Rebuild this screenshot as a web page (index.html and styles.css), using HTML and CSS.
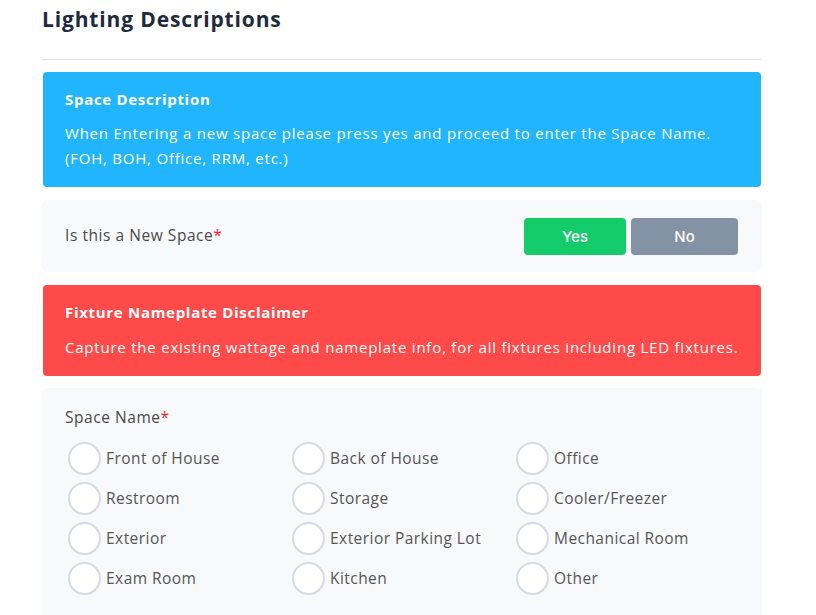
FILE: index.html
```html
<!DOCTYPE html>
<html>
<head>
<meta charset="utf-8">
<link rel="stylesheet" href="styles.css">
</head>
<body>
<div class="page">
  <h1 class="title">Lighting Descriptions</h1>
  <hr class="rule">
  <div class="notice notice-blue">
    <div class="notice-title">Space Description</div>
    <div class="notice-body">When Entering a new space please press yes and proceed to enter the Space Name. (FOH, BOH, Office, RRM, etc.)</div>
  </div>
  <div class="panel panel-row">
    <div class="label label-row">Is this a New Space<span class="req">*</span></div>
    <div class="btns">
      <button class="btn btn-yes">Yes</button>
      <button class="btn btn-no">No</button>
    </div>
  </div>
  <div class="notice notice-red">
    <div class="notice-title">Fixture Nameplate Disclaimer</div>
    <div class="notice-body">Capture the existing wattage and nameplate info, for all fixtures including LED fixtures.</div>
  </div>
  <div class="panel panel-list">
    <div class="label">Space Name<span class="req">*</span></div>
    <div class="grid">
      <label class="opt"><span class="radio"></span>Front of House</label>
      <label class="opt"><span class="radio"></span>Back of House</label>
      <label class="opt"><span class="radio"></span>Office</label>
      <label class="opt"><span class="radio"></span>Restroom</label>
      <label class="opt"><span class="radio"></span>Storage</label>
      <label class="opt"><span class="radio"></span>Cooler/Freezer</label>
      <label class="opt"><span class="radio"></span>Exterior</label>
      <label class="opt"><span class="radio"></span>Exterior Parking Lot</label>
      <label class="opt"><span class="radio"></span>Mechanical Room</label>
      <label class="opt"><span class="radio"></span>Exam Room</label>
      <label class="opt"><span class="radio"></span>Kitchen</label>
      <label class="opt"><span class="radio"></span>Other</label>
    </div>
  </div>
</div>
</body>
</html>
```
FILE: styles.css
```css
* { box-sizing: border-box; }
html, body { margin: 0; padding: 0; background: #fff; }
body {
  font-family: "Open Sans", "Noto Sans", sans-serif;
  color: #4a4a4a;
  overflow: hidden;
}
.page {
  width: 720px;
  margin-left: 42px;
  padding-top: 4px;
}
.title {
  margin: 0;
  font-size: 21px;
  font-weight: 700;
  color: #1f2a3c;
  line-height: 30px;
  letter-spacing: 0.85px;
}
.rule {
  border: 0;
  border-top: 1px solid #e2e2e2;
  margin: 25px 0 12px 0;
}
.notice {
  margin: 0 1px;
  border-radius: 4px;
  color: #fff;
  padding: 16px 22px;
}
.notice-blue { background: #21b5fe; height: 115px; }
.notice-red { background: #ff4a4a; height: 91px; }
.notice-title {
  font-size: 15px;
  font-weight: 700;
  line-height: 22px;
  margin-bottom: 12px;
  letter-spacing: 0.7px;
}
.notice-blue .notice-title { margin-bottom: 11px; }
.notice-body {
  font-size: 15px;
  line-height: 25px;
  letter-spacing: 0.78px;
}
.panel {
  background: #f8f9fb;
  border-radius: 6px;
}
.panel-row {
  display: flex;
  align-items: center;
  justify-content: space-between;
  height: 72px;
  margin: 13px 0 13px 0;
  padding: 1px 24px 0 23px;
}
.label {
  font-size: 15.5px;
  font-weight: 500;
  color: #4a4a4a;
  letter-spacing: 0.55px;
}
.label-row { margin-bottom: 3px; }
.req { color: #ff1f1f; }
.btns { display: flex; gap: 5px; }
.btn {
  border: 0;
  border-radius: 4px;
  color: #fff;
  font-family: "Inter", "Liberation Sans", sans-serif;
  font-size: 15px;
  font-weight: 500;
  height: 37px;
  cursor: pointer;
}
.btn-yes { background: #14cd6a; width: 102px; }
.btn-no { background: #8492a6; width: 107px; }
.panel-list {
  margin-top: 12px;
  padding: 18px 23px 20px 23px;
  height: 240px;
}
.grid {
  display: grid;
  grid-template-columns: 224px 224px 224px;
  margin-top: 10px;
  margin-left: 3px;
}
.opt {
  display: flex;
  align-items: center;
  height: 40px;
  font-size: 15.5px;
  color: #555;
  letter-spacing: 0.45px;
}
.radio {
  width: 33px;
  height: 33px;
  border: 2px solid #d4dbe6;
  border-radius: 50%;
  background: #fff;
  margin-right: 5px;
  flex: none;
}
```
